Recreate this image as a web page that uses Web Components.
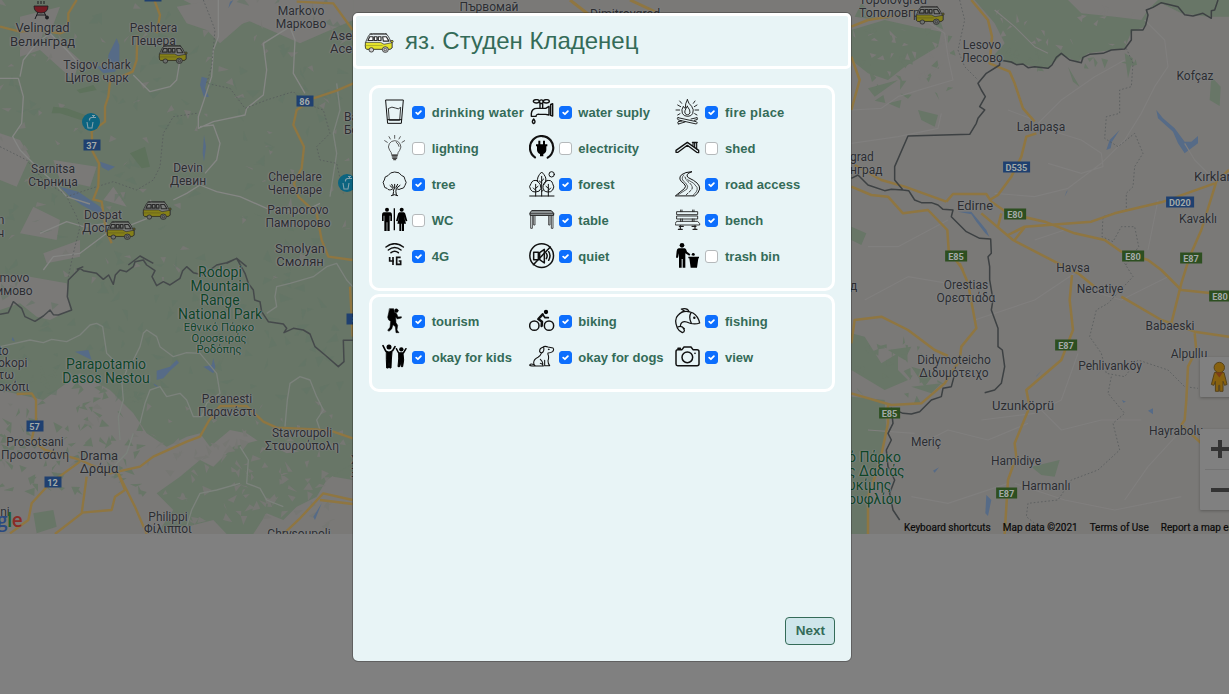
<!DOCTYPE html>
<html lang="en">
<head>
<meta charset="utf-8">
<title>Camping spots</title>
<style>
html,body{margin:0;height:100%;overflow:hidden}
body{background:#808080;font-family:"Liberation Sans",Arial,sans-serif}
</style>
</head>
<body>
<camp-app></camp-app>

<template id="t-map">
<style>
:host{display:block;position:relative;height:534px;overflow:hidden;background:#7a7977}
svg.base{position:absolute;inset:0;width:1229px;height:534px}
.ctl{position:absolute;left:1200px;width:40px;background:#808080;border-radius:1px;box-shadow:0 1px 3px rgba(0,0,0,.25)}
.ctl svg{display:block}
.legal{position:absolute;left:904px;top:521px;display:flex;gap:12px;font:10px/13px Roboto,sans-serif;color:#0a0a0a;white-space:nowrap;-webkit-text-stroke:.2px #0a0a0a}
.logo{position:absolute;left:-3px;top:508px;font:600 19px/24px "Open Sans",sans-serif;letter-spacing:-.6px}
</style>
<svg class="base" viewBox="0 0 1229 534">
<g transform="scale(.33333)" fill="none" stroke-linejoin="round">
 <path fill="#687667" d="M0 0H550L640 45L640 100L700 80L760 60L840 100L1060 60V1440L1000 1430L960 1370L880 1350L800 1340L740 1300L690 1290L630 1340L600 1300L560 1310L500 1340L440 1300L400 1240L330 1170L240 1120L130 1200L0 1170Z"/>
 <path fill="#687667" d="M470 1480L540 1430L600 1380L640 1400L700 1340L780 1320L860 1360L1058 1330V1390L980 1440L950 1490L890 1520L850 1560L800 1540L760 1602H680L640 1560L560 1580L470 1602L520 1530ZM100 1540L160 1530L170 1580L110 1600Z"/>
 <path fill="#7a7977" d="M530 20L640 0H1060V60L900 130L810 90L740 60L660 130L620 90L560 70ZM0 400L60 420L90 470L50 560L0 540ZM0 840L90 830L200 850L210 930L150 960L110 950L60 910L0 930ZM60 50L180 20L150 100L240 180L220 240L120 150L60 170ZM160 480L290 500L270 560L180 540ZM100 620L180 660L170 720L60 700ZM340 560L380 620L310 600ZM130 760L240 720L240 770L140 790Z"/>
 <g id="shardsL"></g>
 <path fill="#5e725c" d="M160 320L200 325L270 350L250 362L180 340L155 340ZM390 460L435 440L450 500L425 505ZM230 270L280 255L290 270L240 280Z"/>
 <path fill="#566b87" d="M350 115L358 135V190L345 215L310 220L290 200L325 195V165ZM605 230L622 235L615 265L627 290L612 292L600 255ZM180 560L235 575L300 620L310 635L290 640L245 615L210 590ZM300 485L345 500L325 512L305 502ZM612 405L618 440L612 485L608 460ZM470 1112L510 1100L530 1080L537 1088L510 1112L490 1135L470 1140ZM460 1150L480 1162L465 1158ZM610 1100L635 1095L640 1075L646 1100L640 1120ZM225 1055L265 1050L275 1080ZM700 0L685 25L690 5ZM945 1560L965 1510L940 1550ZM38 1010L45 1025L35 1020Z"/>
 <g stroke="#858684" stroke-width="4">
  <path d="M0 235H55L70 290L65 370L38 410L60 450L110 500L160 545L200 590L270 612M60 230L70 180L110 130L150 100L200 150L235 190M520 600L560 580L600 555L650 575L720 590L800 625L900 640L960 610M400 225L450 275L510 260L530 240L540 180M655 0L655 110L640 150L635 230L612 300L595 350V385L640 365L735 345L740 325L790 285L800 210L790 130L870 80L885 120L880 220L915 280M600 380L640 375L660 430L650 480L615 520M120 700L200 665L250 680L320 670L320 700L240 760L160 770L130 810M380 680L480 640L450 600"/>
  <path stroke="#7c827c" d="M0 1040L90 1020L130 1028L155 1018L200 1025L240 1005L270 975L290 970L308 980L320 1060L350 1090L380 1110L366 1150L370 1200L355 1250L360 1320M400 1080L420 1040L430 1000L440 990L470 1010L480 1040L520 1070L560 1058L600 1060L650 1120L660 1180L620 1210L605 1250L580 1250L560 1200L540 1180L500 1190L480 1160L450 1170L435 1210L420 1270M800 940L830 920L825 890L830 860L870 850L940 830L980 800L1010 790L1040 840L1058 860M855 1280L862 1200L870 1150L900 1130L930 1140L950 1190L970 1230L950 1260L960 1290M720 1340L745 1380L740 1450L780 1465L800 1500L850 1520M560 1580L575 1530L600 1480L650 1470L720 1450M400 1300L380 1360L340 1400M1010 250L1020 330L1000 400L1010 460L990 590"/>
 </g>
 <g stroke="#55585a" stroke-width="3" stroke-dasharray="5 6" opacity=".75">
  <path d="M610 0L630 50L645 90L635 200L620 250L690 265L735 325L800 300L880 275L915 310L970 330L990 400L950 440L960 480L1010 490L1030 580M590 340L520 350L490 400L480 500L460 540L410 570L340 545L290 560L200 590L230 650L240 680L220 760L205 830M0 440L80 480L130 540L190 580"/>
 </g>
 <g stroke="#8f7641" stroke-width="7">
  <path d="M0 80L60 95L120 90L180 100L205 90V40L230 0M463 0L480 45L470 100M412 105L410 180L398 215L330 245L325 290L315 320V365L275 395L278 455L297 490L295 560L280 598L305 605L318 690L335 730M1060 250L1010 272L940 295L890 330L880 375L912 440L905 505L882 550L895 590L950 640L965 720L985 770L1058 780M890 5L1000 10L1058 90"/>
  <path d="M50 1182L95 1180L108 1200V1260L95 1320L135 1350L240 1380L330 1420L420 1400L460 1370L560 1325L600 1310L628 1260L660 1218H740L790 1265L830 1283L950 1288L1000 1295L1058 1315M240 1385L150 1450L95 1510L85 1560L30 1600M260 1430L245 1540L165 1602M245 1538L335 1530L345 1490L375 1470L350 1410L375 1460L405 1520L440 1602M850 1602L900 1555L970 1480L1058 1500M960 1500L1058 1512M1050 860L1058 1010"/>
 </g>
 <path stroke="#45494b" stroke-width="4.500" d="M0 943L25 938L40 905L65 925L75 950L105 964L130 948L150 930L160 944L175 945L215 930L202 890L205 840L240 805L250 812L290 820L310 838L326 825L340 853L346 825L360 810L380 815L400 800L405 785L430 780L440 795L465 812L456 830L470 857L490 845L510 855L540 835L548 812L560 800L580 818L610 825L650 795L680 788L710 775L735 820L745 850L760 870L764 900L780 905L785 935L805 965L850 972L860 985L852 998L880 985L910 990L930 1002L945 1040L975 1065L1015 1100L1032 1085L1030 1021H1058M230 808L250 800M385 795L420 768L460 790M680 790L710 775L740 800"/>
</g>
<g transform="translate(848 0) scale(.33333)" fill="none" stroke-linejoin="round">
 <path fill="#687667" d="M10 90L110 60L200 80L280 95L270 140L170 200L120 240L60 220L10 180ZM380 0H660L700 40L800 50L880 60L900 30L930 0H1143V50L1080 50L1000 40L940 10L900 30L890 80L850 95L830 145L720 160L690 185L640 165L600 205L490 190L430 175L470 130L440 70ZM40 10L90 60L20 50ZM1090 230L1118 260L1115 318L1085 300ZM10 680L55 700L40 735L10 720ZM60 265L150 240L80 290ZM120 310L160 300L155 325ZM210 330L270 345L260 380L220 360ZM660 200L695 260L675 245ZM830 160L855 175L840 235ZM760 175L780 180L770 205ZM10 1000L50 1010L100 1090L150 1060L150 1110L180 1140L110 1170L10 1110ZM190 1100L260 1120L230 1160ZM10 1190L110 1200L115 1290L100 1360L60 1480L60 1602H10ZM550 1400L635 1380L620 1430L580 1425ZM120 1050L190 1040L170 1080ZM190 1160L280 1150L250 1180Z"/>
 <g id="shardsR"></g>
 <path fill="#566b87" d="M925 330L945 355L980 385L1010 425L1030 425L1050 408V430L1010 460L990 430L975 395L930 355ZM815 390L785 420L775 450L788 445L792 425ZM330 635L370 635L395 665L415 690L424 710L412 700L385 665L370 643ZM565 1130L582 1110L565 1128ZM415 1485L430 1500L420 1548L412 1540ZM900 1232L915 1225V1243ZM255 1412L273 1402L260 1418ZM660 570L650 590L655 575ZM822 1200L834 1205L826 1208Z"/>
 <g stroke="#807f7e" stroke-width="3.500">
  <path d="M230 60L290 100L300 170L315 240L230 265L150 290L100 325L10 330M440 30L500 80L560 140L600 160M10 430L150 410L270 385L280 340M570 370L640 300L740 230L830 180M570 380L700 420L760 460L765 500L700 520L600 490M560 360L480 330M440 580L560 590L660 565L760 490L830 420L880 340L920 260L960 200L950 120L890 60M1100 540L1040 480L1010 430M1110 540L1143 520M930 600L900 750M650 690L560 720M60 740L150 740L300 660M690 1060L640 1200L560 1240L400 1260M560 1210L640 1290L760 1260L880 1260M540 1270L420 1320L300 1290L200 1340M480 1450L300 1510L190 1490M500 1450L650 1500L800 1530L1000 1490M1010 1280L900 1400L830 1500M720 870L820 900L960 830M380 960L560 900L680 820M50 900L180 830L300 850M200 1300L60 1290"/>
 </g>
 <g stroke="#55585a" stroke-width="3" stroke-dasharray="5 6" opacity=".75">
  <path d="M335 0L350 60L330 150L350 200L390 240M835 145L855 190L850 260L815 270V340L775 350L770 415L810 440L860 400L885 460L860 500L855 560L835 580V630L765 650L762 710L795 725L820 680L860 680L872 740L830 800M830 790L855 830L780 910L745 930L725 1010L760 1060L775 1120L830 1130L870 1080L960 1110L1010 1160L1050 1165M790 1130L780 1180L830 1240L795 1270L815 1350L750 1410L670 1440L630 1500L540 1510L535 1550L560 1570"/>
 </g>
 <g stroke="#8f7641" stroke-width="7.500">
  <path d="M370 0L420 60L432 110L425 190L485 215L500 250L525 325L560 365M565 400L535 410L520 470L490 530L450 585L425 600M10 170L35 240L10 330M10 560L70 585L120 590L165 640L240 630L298 690L302 750L345 810M20 495L100 540L170 560L295 605M430 605L480 640L590 665L680 700L770 720L820 755L900 780L940 810M400 640L495 720L620 785M450 680L460 640M480 705L530 680L640 672L730 665L800 640L940 607L1100 550M500 720L530 682M1143 510L1105 545L1060 690L1025 770L1000 850L970 970L940 960L820 890M940 810L1000 870L1143 885M295 605L315 582H415L430 605M620 785L690 820L740 860M672 825L665 900L675 990L640 1080L535 1170L545 1220L500 1330L505 1370L480 1440L470 1602M970 970L1040 995L1143 1010M1040 1000L1045 1050L1020 1100L1015 1200L1010 1260L1000 1275L1060 1330"/>
  <path d="M335 790L360 850L385 985L340 1040L335 1080L290 1150L220 1210L130 1215L10 1180M10 1030L20 960L100 950L180 990L260 1050L300 1068M120 1215V1270L95 1390L60 1490V1602M10 80L60 60L150 45L200 30"/>
 </g>
 <path stroke="#3d4143" stroke-width="4.500" d="M1110 0L1100 30L1090 32V55L1065 40L1035 48L1010 44L990 20L940 8L915 22L895 30L900 45L893 75L885 90L850 90L850 120L830 147L790 150L765 160L725 163L705 172L700 188L665 180L640 160L625 172L612 195L600 205L560 200L540 203L525 192L505 194L490 186L455 180V195L415 220L390 250L400 270L412 290L395 320L410 330L390 355L385 370L365 403L180 408L140 500V540L165 570L130 568L110 572L60 555L30 525L10 535M165 570L182 572L200 600L220 608H250L270 615L285 628L315 630L310 650L355 695L395 715L428 717L430 760L420 770L425 800V840L435 900L430 930L450 985V1040L463 1050L470 1100L460 1150L440 1170L410 1178M318 1130L310 1160L285 1165L280 1190L250 1200L215 1235L190 1242L165 1240L130 1225L135 1270L120 1300L130 1320L115 1350L120 1400L140 1440L125 1480L135 1530L155 1560"/>
</g>
<g fill="none" stroke="#8f7641" stroke-width="3"><path d="M570 0L588 14M630 0L660 14"/></g>
</svg>
<div id="marks"></div>
<div class="logo"><span style="color:#2b4a80">g</span><span style="color:#1d6130">l</span><span style="color:#8a2b26">e</span></div>
<div class="ctl" style="top:357px;height:40px"><svg width="40" height="40" viewBox="0 0 40 40"><path d="M14.500 15.500h9.500l3 12-2.500.8-1.500-4v10h-3.300v-6h-1v6h-3.300v-10l-1.500 4-2.500-.8z" fill="#87610f" stroke="#57431a"/><circle cx="19.300" cy="10.500" r="5.200" fill="#87610f" stroke="#57431a"/><path d="M15.500 15.500l3.800 5 3.700-5z" fill="#7c3c17"/></svg></div>
<div class="ctl" style="top:429px;height:81px"><svg width="40" height="81" viewBox="0 0 40 81" stroke="#333" stroke-width="4"><path d="M11 20H29M20 11V29M11 61H29"/><path d="M5 40.500H40" stroke="#737373" stroke-width="1"/></svg></div>
<div class="legal"><span>Keyboard shortcuts</span><span>Map data ©2021</span><span>Terms of Use</span><span>Report a map error</span></div>
</template>

<template id="t-van">
<style>:host{display:block;width:30px;height:20px}svg{display:block;width:100%;height:100%}</style>
<svg viewBox="0 0 90 64" preserveAspectRatio="none" stroke="#2a2a2a" stroke-width="2.500" stroke-linejoin="round">
<path d="M6 26L14 8Q16 4 28 4H66Q72 5 80 26L84 32V48L78 52H8Q3 50 4 40Z" fill="var(--w,#e6eef0)"/>
<path d="M4 30H50L60 36L84 31V48L78 52H8Q3 50 4 40Z" fill="var(--y,#e3e22c)" stroke-width="2"/>
<path d="M16 4Q18 1 26 1H62Q68 1 70 5" fill="none"/>
<path d="M12 24L17 12H27V24ZM31 12H39V24H31ZM43 12H51V24H43ZM56 12H67L75 26H58Z" fill="var(--w,#fff)" stroke-width="3.500"/>
<path d="M5 40H56" stroke-width="1.500" opacity=".5"/>
<circle cx="22" cy="54" r="7" fill="var(--g,#ccc)"/><circle cx="64" cy="53" r="9" fill="var(--g,#ccc)"/><circle cx="64" cy="53" r="4" fill="none" stroke-width="2"/>
<circle cx="84" cy="27" r="3.500" fill="var(--y,#e3e22c)"/></svg>
</template>

<template id="t-dialog">
<style>
:host{box-sizing:border-box;display:flex;flex-direction:column;width:498px;height:648px;background:#e8f4f6;border-radius:5px;outline:1px solid rgba(0,0,0,.25);color:#346b58}
header{box-sizing:border-box;height:56px;border:3px solid #fff;border-radius:5px;display:flex;align-items:center;padding:2px 8px 0 8px;gap:11px}
camper-van{margin-top:2px}
h1{margin:-2px 0 0;font-weight:400;font-size:24px;line-height:30px;color:#346b58;white-space:nowrap}
main{flex:1;padding:16px;display:flex;flex-direction:column;gap:3px}
footer{padding:16px;display:flex;justify-content:flex-end}
button{box-sizing:border-box;width:50px;height:28px;border:1px solid #346b58;border-radius:4px;background:#cfe6eb;color:#346b58;font:bold 13.500px/24px "Liberation Sans",Arial,sans-serif;padding:0 0 0 1px}
</style>
<header><camper-van></camper-van><h1><slot name="title"></slot></h1></header>
<main><slot></slot></main>
<footer><button type="button">Next</button></footer>
</template>

<template id="t-group">
<style>:host{box-sizing:border-box;display:grid;grid-template-columns:repeat(3,1fr);grid-auto-rows:36px;border:3px solid #fff;border-radius:10px;padding:10px}</style>
<slot></slot>
</template>

<template id="t-item">
<style>
:host{display:block;min-width:0}
label{display:flex;align-items:center;height:28px;white-space:nowrap;font:bold 13px/20px "Liberation Sans",Arial,sans-serif;color:#346b58}
.i{width:26px;height:26px;flex:none;margin-right:4px;fill:none;stroke:#111;stroke-width:3;stroke-linecap:round;stroke-linejoin:round}
.c{box-sizing:border-box;width:13px;height:13px;flex:none;border:1px solid #b5b9bb;border-radius:3px;background:#fff;margin-right:6.700px}
.c svg{display:none}
.t{padding-top:1px}
:host([checked]) .c{background:#0d6efd;border-color:#0d6efd}
:host([checked]) .c svg{display:block;width:11px;height:11px}
:host([wide]) .t{letter-spacing:.25px}
</style>
<label><svg class="i" viewBox="0 0 78 78"></svg><span class="c"><svg viewBox="0 0 11 11" fill="none" stroke="#fff" stroke-width="1.800" stroke-linecap="round" stroke-linejoin="round"><path d="M3.200 5.700L4.900 7.200L7.900 4.200"/></svg></span><span class="t"><slot></slot></span></label>
</template>

<template id="t-app">
<style>
:host{display:block;position:relative;width:1229px;height:694px;background:#808080;overflow:hidden}
.over{position:absolute;inset:0;display:flex;justify-content:center;align-items:flex-start;padding:13px 25px 0 0;box-sizing:border-box}
</style>
<spot-map></spot-map>
<div class="over"><spot-dialog><span slot="title">яз. Студен Кладенец</span>
<feature-group>
<feature-item icon="glass" checked wide>drinking water</feature-item><feature-item icon="tap" checked>water suply</feature-item><feature-item icon="fire" checked wide>fire place</feature-item>
<feature-item icon="bulb">lighting</feature-item><feature-item icon="plug">electricity</feature-item><feature-item icon="shed">shed</feature-item>
<feature-item icon="tree" checked>tree</feature-item><feature-item icon="forest" checked>forest</feature-item><feature-item icon="road" checked>road access</feature-item>
<feature-item icon="wc">WC</feature-item><feature-item icon="table" checked>table</feature-item><feature-item icon="bench" checked>bench</feature-item>
<feature-item icon="lte" checked>4G</feature-item><feature-item icon="quiet" checked>quiet</feature-item><feature-item icon="bin">trash bin</feature-item>
</feature-group>
<feature-group>
<feature-item icon="hiker" checked>tourism</feature-item><feature-item icon="bike" checked>biking</feature-item><feature-item icon="fish" checked>fishing</feature-item>
<feature-item icon="kids" checked>okay for kids</feature-item><feature-item icon="dog" checked>okay for dogs</feature-item><feature-item icon="camera" checked>view</feature-item>
</feature-group>
</spot-dialog></div>
</template>

<script>
const ICONS = {
glass:`<path d="M12 3H64L58 73H18ZM17 62H59"/><path d="M20 28Q30 21 40 27T56 25L53 64H23Z" stroke-width="2.500"/>`,
tap:`<g stroke-width="4.200"><ellipse cx="22" cy="7" rx="9" ry="5"/><ellipse cx="52" cy="7" rx="9" ry="5"/><circle cx="37" cy="8" r="5.500"/><path d="M33 15V26M41 15V26M7 52V44Q8 28 24 28H50L60 22V48L50 46H32Q22 44 21 52ZM65 16L71 14V51L65 49Z"/><path d="M14 60Q6 70 14 74Q22 70 14 60Z"/></g>`,
fire:`<g stroke-width="2.700"><path d="M37 2Q40 14 50 22Q58 32 53 44Q49 52 38 52Q26 52 22 43Q18 32 25 22Q28 28 31 28Q30 14 37 2Z"/><path d="M37 22Q47 34 45 42Q38 52 30 43Q27 36 37 22Z"/><path d="M9 56L64 68Q70 72 64 75L10 63Q4 58 9 56ZM66 56L48 60M10 75L30 69M66 62L58 64M10 68L20 66M66 56Q70 59 66 62M10 68Q5 71 10 75"/><path d="M8 18L17 23M3 33H14M8 48L15 44M66 18L58 23M71 33H60M66 48L59 44M14 6L20 13M60 6L55 13"/></g>`,
bulb:`<g stroke="#444" stroke-width="2.600"><path d="M29 58Q29 52 23 46Q16 36 22 26Q28 17 38 17Q48 17 54 26Q60 36 53 46Q47 52 47 58Z"/><path d="M43 22Q50 26 51 34"/><path d="M30 62H46M31 66H45M32 70H44M35 74H41" stroke-width="3.500"/><path d="M38 1V10M21 5L25 12M55 5L51 12M8 17L16 22M68 17L60 22"/></g>`,
plug:`<path d="M18 67A35 35 0 1 1 56 68" stroke-width="6.500"/><path d="M21 28H55V34H52V46Q50 56 43 57V64H33V57Q26 56 24 46V34H21ZM28 17H34V30H28ZM42 17H48V30H42Z" fill="#000" stroke="none"/>`,
shed:`<path d="M3 46L37 22L71 46V53L65 52L37 31L9 52H3Z" stroke-width="4"/><path d="M54 31V23H65V42M52 22H67M59 25V36" stroke-width="3.500"/>`,
tree:`<path d="M33 72Q37 60 33 52L24 44M43 72Q40 60 43 52L54 43M28 74L37 71L47 74M38 40V54M29 40L34 49M47 40L42 49"/><path d="M30 55Q20 60 15 52Q6 52 6 42Q0 33 7 27Q7 15 18 14Q24 3 38 3Q54 3 58 13Q69 15 69 26Q76 34 69 43Q66 54 57 53Q51 58 46 54" stroke-width="2.800"/>`,
forest:`<path d="M2 75H75"/><path d="M20 75V40M38 75V16M58 75V40M38 30L44 24M38 36L31 30M20 58L13 51M20 52L27 46M58 58L65 51M58 52L51 46M38 62L44 56"/><path d="M26 32Q22 18 38 3Q54 18 50 30Q48 38 44 42M24 29Q10 25 6 38Q-2 46 5 56Q10 64 20 63Q33 63 36 52Q37 38 24 29ZM54 29Q68 25 71 38Q78 48 71 57Q66 64 57 63Q42 62 42 50Q41 36 54 29Z"/><circle cx="68" cy="10" r="8"/>`,
road:`<path d="M2 74L28 53Q36 46 27 38Q6 24 20 11Q30 3 51 2Q28 10 40 20Q76 36 74 54Q70 68 60 74Z"/><path d="M10 71L36 54Q42 46 32 36Q14 24 26 12M54 73Q70 60 66 49Q60 36 38 26" stroke-width="2"/><path d="M30 18Q34 30 44 36Q56 48 50 56L34 71" stroke-width="2.500" stroke-dasharray="7 5"/>`,
wc:`<g fill="#000" stroke="none"><circle cx="15" cy="8" r="6"/><path d="M5 16H25Q30 17 30 24V42H25V26H23V72H16V46H14V72H7V26H5V42H0V24Q0 17 5 16ZM35 4H39V70H35Z"/><circle cx="59" cy="8" r="6"/><path d="M52 16H66Q70 18 71 24L76 42L71 43L66 28L72 50H66V72H60V50H58V72H52V50H46L52 28L47 43L42 42L47 24Q48 18 52 16Z"/></g>`,
table:`<path d="M9 11H67L74 19V25H3V19Z" fill="#9da4a5"/><path d="M3 19H74M5 25V64H10V27M67 27V64H72V25M14 27V54H18V27M59 27V54H63V27" stroke="#333" stroke-width="2.600"/>`,
bench:`<g stroke="#222" stroke-width="2.700"><path d="M6 14H68V23H6ZM6 27H68V36H6ZM6 43H68L74 50V54H1V50ZM17 9V14M57 9V14M21 9V14M53 9V14M17 36V43M57 36V43M22 36V43M52 36V43"/><path d="M13 58H25M51 58H63M16 56V66M60 56V66M10 67H22M54 67H66" stroke-width="3.600"/></g>`,
lte:`<g stroke-width="4.500"><path d="M12 12Q38 -8 64 12M19 21Q38 6 57 21M27 29Q38 20 49 29"/><path d="M23 42V54H36M33 42V66M56 43H44V64H56V54H50" stroke-width="5" stroke-linecap="butt" stroke-linejoin="miter"/></g>`,
quiet:`<circle cx="38" cy="38" r="35.500" stroke-width="4.500"/><path d="M13 65L64 12" stroke-width="4.500"/><path d="M14 28H28V50H14ZM32 29L46 19V60L32 50ZM52 31Q57 38 52 47M59 26Q67 38 59 52" stroke-width="4.500"/>`,
bin:`<g fill="#000" stroke="none"><circle cx="21" cy="7" r="7"/><path d="M11 16H30Q34 18 36 26L46 34L43 38L31 31V74H23V48H20V74H12V31L9 44H3L5 24Q6 17 11 16ZM40 41H72V46H70L66 74H47L43 46H40ZM49 35L54 31L60 37H50Z"/><circle cx="55" cy="34" r="4"/></g>`,
hiker:`<g fill="#000" stroke="#000" stroke-width="1.500"><circle cx="43" cy="8" r="5.500"/><path d="M23 2H35L37 12L44 17L48 27L58 26V30L46 33L41 27L42 44L47 52L45 66L51 74H42L40 56L33 50L29 63L21 70L17 67L24 58L26 40L20 36L17 28L20 14Z"/></g>`,
bike:`<circle cx="16" cy="53" r="14" stroke-width="4.500"/><circle cx="60" cy="53" r="14" stroke-width="4.500"/><circle cx="51" cy="12" r="6.500" fill="#000" stroke="none"/><path d="M41 19L28 33L39 41L38 54" stroke-width="7.500"/><path d="M42 20L48 29H58" stroke-width="5"/>`,
fish:`<g stroke-width="3.800"><path d="M20 13Q35 6 54 15Q70 25 74 45Q56 52 35 42Q18 38 16 54Q24 56 28 66Q29 72 22 74Q12 70 7 60Q-4 34 9 22Q14 16 20 13ZM48 14Q40 28 49 46M20 12L28 9L19 3Q38 -1 42 11M9 57Q18 52 28 62"/><circle cx="58" cy="29" r="1.800" fill="#000"/></g>`,
kids:`<g fill="#000" stroke="none"><circle cx="21" cy="9" r="7.500"/><circle cx="58" cy="16" r="6.500"/></g><g stroke="#000"><path d="M3 5L11 21L21 27L32 20L39 8" stroke-width="5"/><path d="M14 24H30L28 48L27 72H23L21 54L19 72H14L13 48Z" fill="#000"/><path d="M43 14L50 27H64L72 14" stroke-width="4.500"/><path d="M51 28H63L65 48L62 68H58L57 54L53 68H48L50 46Z" fill="#000"/></g>`,
dog:`<path d="M41 10Q47 5 57 9L72 12Q76 17 71 23Q65 27 57 27Q56 30 58 34Q60 42 57 50Q57 59 62 65H47V49M41 10Q31 13 32 23Q36 29 42 24Q46 18 44 11M37 28Q34 36 27 40Q14 46 14 57Q15 63 19 66H43Q41 59 34 58M34 46Q43 54 41 61M15 62Q5 58 2 63Q3 67 19 66" stroke-width="3.200"/><circle cx="59" cy="16" r="1" fill="#000"/>`,
camera:`<g stroke-width="4.500"><path d="M8 17H21L27 9H48L54 17H66Q72 17 72 23V60Q72 65 66 65H8Q3 65 3 60V23Q3 17 8 17ZM9 16V13H16V16"/><circle cx="37" cy="40" r="16"/></g><circle cx="60" cy="28" r="2.500" fill="#000" stroke="none"/>`
};
const tpl = id => document.getElementById(id).content.cloneNode(true);
const define = (name, id, ready) => customElements.define(name, class extends HTMLElement {
  constructor(){ super(); this.attachShadow({mode:"open"}).append(tpl(id)); }
  connectedCallback(){ if (ready && !this.done) { this.done = true; ready(this, this.shadowRoot); } }
});

/* text, centre x, top y, size, line height, tone (l: left aligned, g: park green) */
const LABELS = [
["Velingrad\nВелинград",42.5,21,13,14],["Peshtera\nПещера",153.5,22,12,12.5],["Tsigov chark\nЦигов чарк",97,59,12,12.5],
["Markovo\nМарково",301,5,12,12.5],["Asenovgrad\nАсеновград",330,29,13,13,"l"],["Sarnitsa\nСърница",53,163,12,12.5],
["Devin\nДевин",188,162,12,12.5],["Chepelare\nЧепеларе",295,171,12,12.5],["Dospat\nДоспат",103,209,12,12.5],
["Pamporovo\nПампорово",298,204,12,12.5],["Smolyan\nСмолян",300,242,13,13],["Banite\nБоните",344,111,12,12.5,"l"],
["movo\nимово",14.5,272,12,12.5],["n\nч",1,214,12,12.5],["to\nokopi\nτω\nοκόπι",-2,345,12,12,"l"],["Prosotsani\nΠροσοτσάνη",35,436,12,12.5],["Drama\nΔράμα",99,449,13,13],
["Paranesti\nΠαρανέστι",227,393,12,12.5],["Stavroupoli\nΣταυρούπολη",302,427,12,12.5],["Philippi\nΦίλιπποι",168,510.5,12,12.5],["Chrysoupoli",299,528,12,12],["ni",5,506,12,12],["Xanthi\nΞάνθη",351,454,12,13,"l"],
["Rodopi\nMountain\nRange\nNational Park",220,265,14,14,"g"],["Εθνικό Πάρκο\nΟροσειράς\nΡοδόπης",219,321.5,11.2,11,"g"],["Parapotamio\nDasos Nestou",106,357,14,14,"g"],
["Първомай",489,1,12,12],["Dimitrovgrad",625,8,12.3,12],["Topolovgrad\nТополовград",859,-6,12.3,12.5,"l"],["Lesovo\nЛесово",982,39,12,12.5],["Kofçaz",1195,70,12,12],["Lalapaşa",1041,121,12,12],
["grad\nнград",850,151,12,12.5,"l"],["Edirne",975,199,13,13],["Kırklareli",1194,170,13,13,"l"],["Kavaklı",1198,213,12,12],["Havsa",1073,262,12,12],["Necatiye",1100,283,12,12],["д",850,280,12,12,"l"],
["Orestias\nΟρεστιάδα",966,279,12,12.5],["Babaeski",1170,320,12,12],["Alpullu",1189,348,12,12],["Pehlivanköy",1110,360,12,12],["Didymoteicho\nΔιδυμότειχο",954,354,12,12.5],["Uzunköprü",1023,399,13,13],["Meriç",926,436,12,12],
["Hayrabolu",1176,425,12,12],["Hamidiye",1016,455,12,12],["Harmanlı",1046,480,12,12],["ό Πάρκο\nς Δαδιάς\nυκίμης\nουφλίου",848,450,14,14,"gl"]];
const SHIELDS = [["86",304.5,101,"b"],["37",91.5,145,"b"],["57",34.5,426,"b"],["12",52.5,482,"b"],["8",355,319,"b"],["",153,-4,"b"],["D535",1016.5,166.5,"b"],["D020",1180,201.5,"b"],
["E80",1015,213.5,"e"],["E85",956,255.5,"e"],["E80",1133,255.5,"e"],["E87",1191,257.5,"e"],["E80",1220,296,"e"],["E87",1066,344.5,"e"],["E85",889.5,412.5,"e"],["E87",1006.5,492.5,"e"]];

customElements.define("map-label", class extends HTMLElement {
  connectedCallback(){
    const [text,x,y,size,lh,kind=""] = this.data;
    const left = kind.includes("l"), green = kind.includes("g");
    this.attachShadow({mode:"open"}).innerHTML = `<style>:host{position:absolute;left:${x}px;top:${y}px;${left?"":"transform:translateX(-50%);text-align:center;"}font:${size}px/${lh}px Roboto,sans-serif;white-space:pre;color:${green?"#0e4526":"#2c2d30"};text-shadow:0 0 1px #84868a,0 0 2px #84868a,1px 0 1px #808280,-1px 0 1px #808280}</style><span></span>`;
    this.shadowRoot.querySelector("span").textContent = text;
  }
});
customElements.define("road-shield", class extends HTMLElement {
  connectedCallback(){
    const [text,x,y,kind] = this.data;
    this.attachShadow({mode:"open"}).innerHTML = `<style>:host{position:absolute;left:${x}px;top:${y}px;transform:translate(-50%,-50%);box-sizing:border-box;min-width:17px;height:11px;padding:0 3px;background:${kind==="b"?"#1f4070":"#2d4f20"};color:#a3aaa8;font:700 9.200px/11px Roboto,sans-serif;text-align:center}</style><span></span>`;
    this.shadowRoot.querySelector("span").textContent = text;
  }
});
customElements.define("tap-pin", class extends HTMLElement {
  connectedCallback(){
    this.attachShadow({mode:"open"}).innerHTML = `<style>:host{position:absolute;width:18px;height:18px}svg{display:block}</style><svg width="18" height="18" viewBox="0 0 18 18" fill="none" stroke="#83a1ab" stroke-width="1.100"><circle cx="9" cy="9" r="9" fill="#0c6480" stroke="none"/><path d="M7.500 7.500Q7 5 9.500 4.500H14M10 2.500H13M11.500 2.500V4.500M5 9L6 15H10L11 9"/></svg>`;
  }
});
define("camper-van","t-van");
define("spot-map","t-map",(el,root)=>{
  const marks = root.getElementById("marks");
  const add = (tag,data) => { const n = document.createElement(tag); n.data = data; marks.append(n); return n; };
  LABELS.forEach(d => add("map-label",d));
  SHIELDS.forEach(d => add("road-shield",d));
  [[158,45],[142,201],[106,220.500],[915,6]].forEach(([x,y]) => { const v = add("camper-van"); v.style.cssText = `position:absolute;left:${x}px;top:${y}px;height:19px;--w:#7b7d7b;--y:#858018;--g:#6d706e`; });
  [[82,113],[338,174]].forEach(([x,y]) => { add("tap-pin").style.cssText = `left:${x}px;top:${y}px`; });
  const g = document.createElement("div");
  g.style.cssText = "position:absolute;left:33px;top:1px";
  g.innerHTML = `<svg width="17" height="19" viewBox="0 0 17 19" fill="none" stroke="#1c1c20"><path d="M5 0V3M8 0V3M11 0V3M5 11L2 18M11 11L14 17M4 14H13"/><path d="M1 5H15Q15 12 8 12Q1 12 1 5Z" fill="#751b23" stroke-width=".8"/><circle cx="14" cy="16.500" r="1.500" fill="#222"/></svg>`;
  marks.append(g);
  /* seeded relief flecks over the forested and open land */
  let s = 7; const r = () => (s = (s*16807)%2147483647)/2147483647;
  const fleck = (x,y,m) => { let p=""; const a=r()*6.28; for(let i=0;i<3;i++){const t=a+i*(1.3+r()*1.5),q=m*(.4+r());p+=(i?"L":"M")+(x+Math.cos(t)*q).toFixed(0)+" "+(y+Math.sin(t)*q).toFixed(0);} return p+"Z"; };
  let land="",deep="",green="";
  for(let i=0;i<330;i++){ const x=r()*1060,y=r()*1440; (r()<.5&&y<860||y>1200)?land+=fleck(x,y,13):deep+=fleck(x,y,17); }
  for(let i=0;i<70;i++) land+=fleck(480+r()*560,1330+r()*240,16);
  for(let i=0;i<110;i++) green+=fleck(r()*430,1110+r()*370,15);
  root.getElementById("shardsL").innerHTML=`<path fill="#767773" d="${land}"/><path fill="#637466" opacity=".6" d="${deep}"/><path fill="#687667" d="${green}"/>`;
  let gr="",ld=""; for(let i=0;i<26;i++){gr+=fleck(20+r()*300,40+r()*260,14);ld+=fleck(20+r()*290,80+r()*160,13);} for(let i=0;i<22;i++){gr+=fleck(430+r()*460,150+r()*60,12);ld+=fleck(440+r()*440,20+r()*120,11);gr+=fleck(20+r()*260,1010+r()*190,14);}
  root.getElementById("shardsR").innerHTML=`<path fill="#687667" d="${gr}"/><path fill="#7a7977" d="${ld}"/>`;
});
define("feature-item","t-item",(el,root)=>{ root.querySelector(".i").innerHTML = ICONS[el.getAttribute("icon")]; });
define("feature-group","t-group");
define("spot-dialog","t-dialog");
define("camp-app","t-app");
</script>
</body>
</html>
